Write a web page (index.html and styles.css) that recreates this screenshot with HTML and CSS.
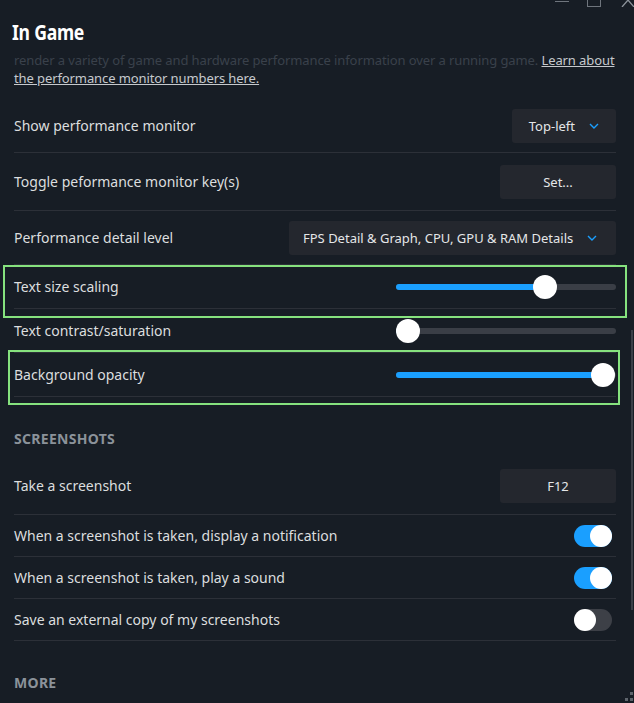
FILE: index.html
```html
<!DOCTYPE html>
<html>
<head>
<meta charset="utf-8">
<link rel="stylesheet" href="styles.css">
</head>
<body>
<div class="window">
  <div class="winctl">
    <span class="wc wc-min"></span>
    <span class="wc wc-max"></span>
    <svg class="wc-close" width="14" height="8" viewBox="0 0 14 8"><path d="M1 8 L7 1 L13 8" stroke="#8b929a" stroke-width="1.3" fill="none"/></svg>
  </div>
  <div class="content">
    <h1 class="title">In Game</h1>
    <p class="desc">render a variety of game and hardware performance information over a running game. <a class="link">Learn about</a><br><a class="link">the performance monitor numbers here.</a></p>

    <div class="row row-a">
      <span class="label">Show performance monitor</span>
      <div class="dropdown dd-small"><span>Top-left</span><svg class="chev" width="10" height="6" viewBox="0 0 10 6"><path d="M1 1 L5 5 L9 1" stroke="#1a9fff" stroke-width="1.4" fill="none"/></svg></div>
    </div>
    <div class="row row-b">
      <span class="label">Toggle peformance monitor key(s)</span>
      <div class="btn">Set...</div>
    </div>
    <div class="row row-c">
      <span class="label">Performance detail level</span>
      <div class="dropdown dd-wide"><span>FPS Detail &amp; Graph, CPU, GPU &amp; RAM Details</span><svg class="chev" width="10" height="6" viewBox="0 0 10 6"><path d="M1 1 L5 5 L9 1" stroke="#1a9fff" stroke-width="1.4" fill="none"/></svg></div>
    </div>
    <div class="row row-s hl hl-1">
      <span class="label">Text size scaling</span>
      <div class="slider"><div class="fill" style="width:149px"></div><div class="thumb" style="left:149px"></div></div>
    </div>
    <div class="row row-s">
      <span class="label">Text contrast/saturation</span>
      <div class="slider"><div class="fill" style="width:12px"></div><div class="thumb" style="left:12px"></div></div>
    </div>
    <div class="row row-s hl hl-2">
      <span class="label">Background opacity</span>
      <div class="slider"><div class="fill" style="width:207px"></div><div class="thumb" style="left:207px"></div></div>
    </div>

    <h2 class="section">SCREENSHOTS</h2>
    <div class="row row-g">
      <span class="label">Take a screenshot</span>
      <div class="btn">F12</div>
    </div>
    <div class="row row-t">
      <span class="label">When a screenshot is taken, display a notification</span>
      <div class="toggle on"><span class="knob"></span></div>
    </div>
    <div class="row row-t">
      <span class="label">When a screenshot is taken, play a sound</span>
      <div class="toggle on"><span class="knob"></span></div>
    </div>
    <div class="row row-t">
      <span class="label">Save an external copy of my screenshots</span>
      <div class="toggle"><span class="knob"></span></div>
    </div>

    <h2 class="section section-more">MORE</h2>
  </div>
  <div class="scrollbar"></div>
  <div class="grip"><i class="g1"></i><i class="g2"></i><i class="g3"></i></div>
</div>
</body>
</html>
```

FILE: styles.css
```css
* { box-sizing: border-box; }
html, body {
  margin: 0;
  padding: 0;
  background: #171d25;
  width: 634px;
  height: 703px;
  overflow: hidden;
}
body {
  font-family: "Noto Sans", "Liberation Sans", sans-serif;
  color: #dcdedf;
}
.window {
  position: relative;
  width: 634px;
  height: 703px;
  overflow: hidden;
}
.winctl {
  position: absolute;
  top: 0;
  right: 0;
  width: 90px;
  height: 10px;
}
.wc {
  position: absolute;
  display: block;
}
.wc-min {
  left: 11px;
  top: 1px;
  width: 14px;
  height: 1px;
  background: #6f757d;
}
.wc-max {
  left: 43px;
  top: -4px;
  width: 14px;
  height: 11px;
  border: 1px solid #6f757d;
}
.wc-close {
  position: absolute;
  left: 77px;
  top: -1px;
}
.content {
  padding: 0 18px 0 14px;
}
.title {
  margin: 0;
  padding-top: 16px;
  height: 50px;
  font-size: 22px;
  font-weight: 700;
  color: #ffffff;
  line-height: 30px;
  letter-spacing: -0.3px;
  transform: scaleX(0.8);
  transform-origin: 0 0;
  margin-left: -2px;
}
.desc {
  margin: 0;
  padding-top: 1px;
  font-size: 13px;
  line-height: 18px;
  letter-spacing: -0.1px;
  color: #3a414b;
  height: 49px;
  white-space: nowrap;
}
.link {
  color: #c6c9cd;
  text-decoration: underline;
}
.row {
  display: flex;
  align-items: center;
  justify-content: space-between;
  border-bottom: 1px solid #2c3038;
  position: relative;
}
.label {
  font-size: 14px;
  color: #dcdedf;
  white-space: nowrap;
}
.row-a { height: 54px; }
.row-b { height: 58px; }
.row-c { height: 54px; }
.row-s { height: 44px; }
.row-g { height: 58px; }
.row-t { height: 42px; }
.dropdown {
  display: flex;
  align-items: center;
  height: 34px;
  background: #24272e;
  border-radius: 3px;
  font-size: 13px;
  font-weight: 400;
  color: #e4e6e8;
  padding: 0 17px 0 14px;
  gap: 14px;
  white-space: nowrap;
}
.dd-small { width: 104px; justify-content: flex-end; }
.dd-wide { width: 327px; }
.chev { margin-top: 1px; }
.btn {
  width: 116px;
  height: 34px;
  background: #24272e;
  border-radius: 3px;
  font-size: 13px;
  font-weight: 400;
  display: flex;
  align-items: center;
  justify-content: center;
  color: #e4e6e8;
}
.slider {
  position: relative;
  width: 220px;
  height: 6px;
  background: #3a3e46;
  border-radius: 3px;
}
.fill {
  position: absolute;
  left: 0;
  top: 0;
  height: 6px;
  background: #1a9fff;
  border-radius: 3px;
}
.thumb {
  position: absolute;
  top: 50%;
  width: 24px;
  height: 24px;
  margin: -12px 0 0 -12px;
  background: #ffffff;
  border-radius: 50%;
}
.hl::after {
  content: "";
  position: absolute;
  border: 2px solid #86e27e;
  pointer-events: none;
}
.hl-1::after { left: -11px; right: -11px; top: 0; bottom: -10px; }
.hl-2::after { left: -6px; right: -4px; top: -3px; bottom: -9px; }
.section {
  margin: 0;
  font-size: 14px;
  font-weight: 700;
  color: #8b929a;
  letter-spacing: 0.3px;
  line-height: 20px;
  padding-top: 32px;
  height: 60px;
}
.section-more { padding-top: 32px; }
.toggle {
  position: relative;
  width: 38px;
  height: 22px;
  border-radius: 11px;
  background: #3d4047;
  margin-right: 4px;
}
.toggle.on { background: #1a9fff; }
.knob {
  position: absolute;
  top: 0;
  left: 0;
  width: 22px;
  height: 22px;
  border-radius: 50%;
  background: #ffffff;
}
.toggle.on .knob { left: 16px; }
.scrollbar {
  position: absolute;
  right: 1px;
  top: 330px;
  width: 2px;
  height: 280px;
  background: #3a3f47;
}
.grip i {
  position: absolute;
  width: 3px;
  height: 3px;
  background: #5e646c;
}
.grip .g1 { right: 1px; top: 692px; }
.grip .g2 { right: 1px; top: 698px; }
.grip .g3 { right: 6px; top: 698px; }
```
